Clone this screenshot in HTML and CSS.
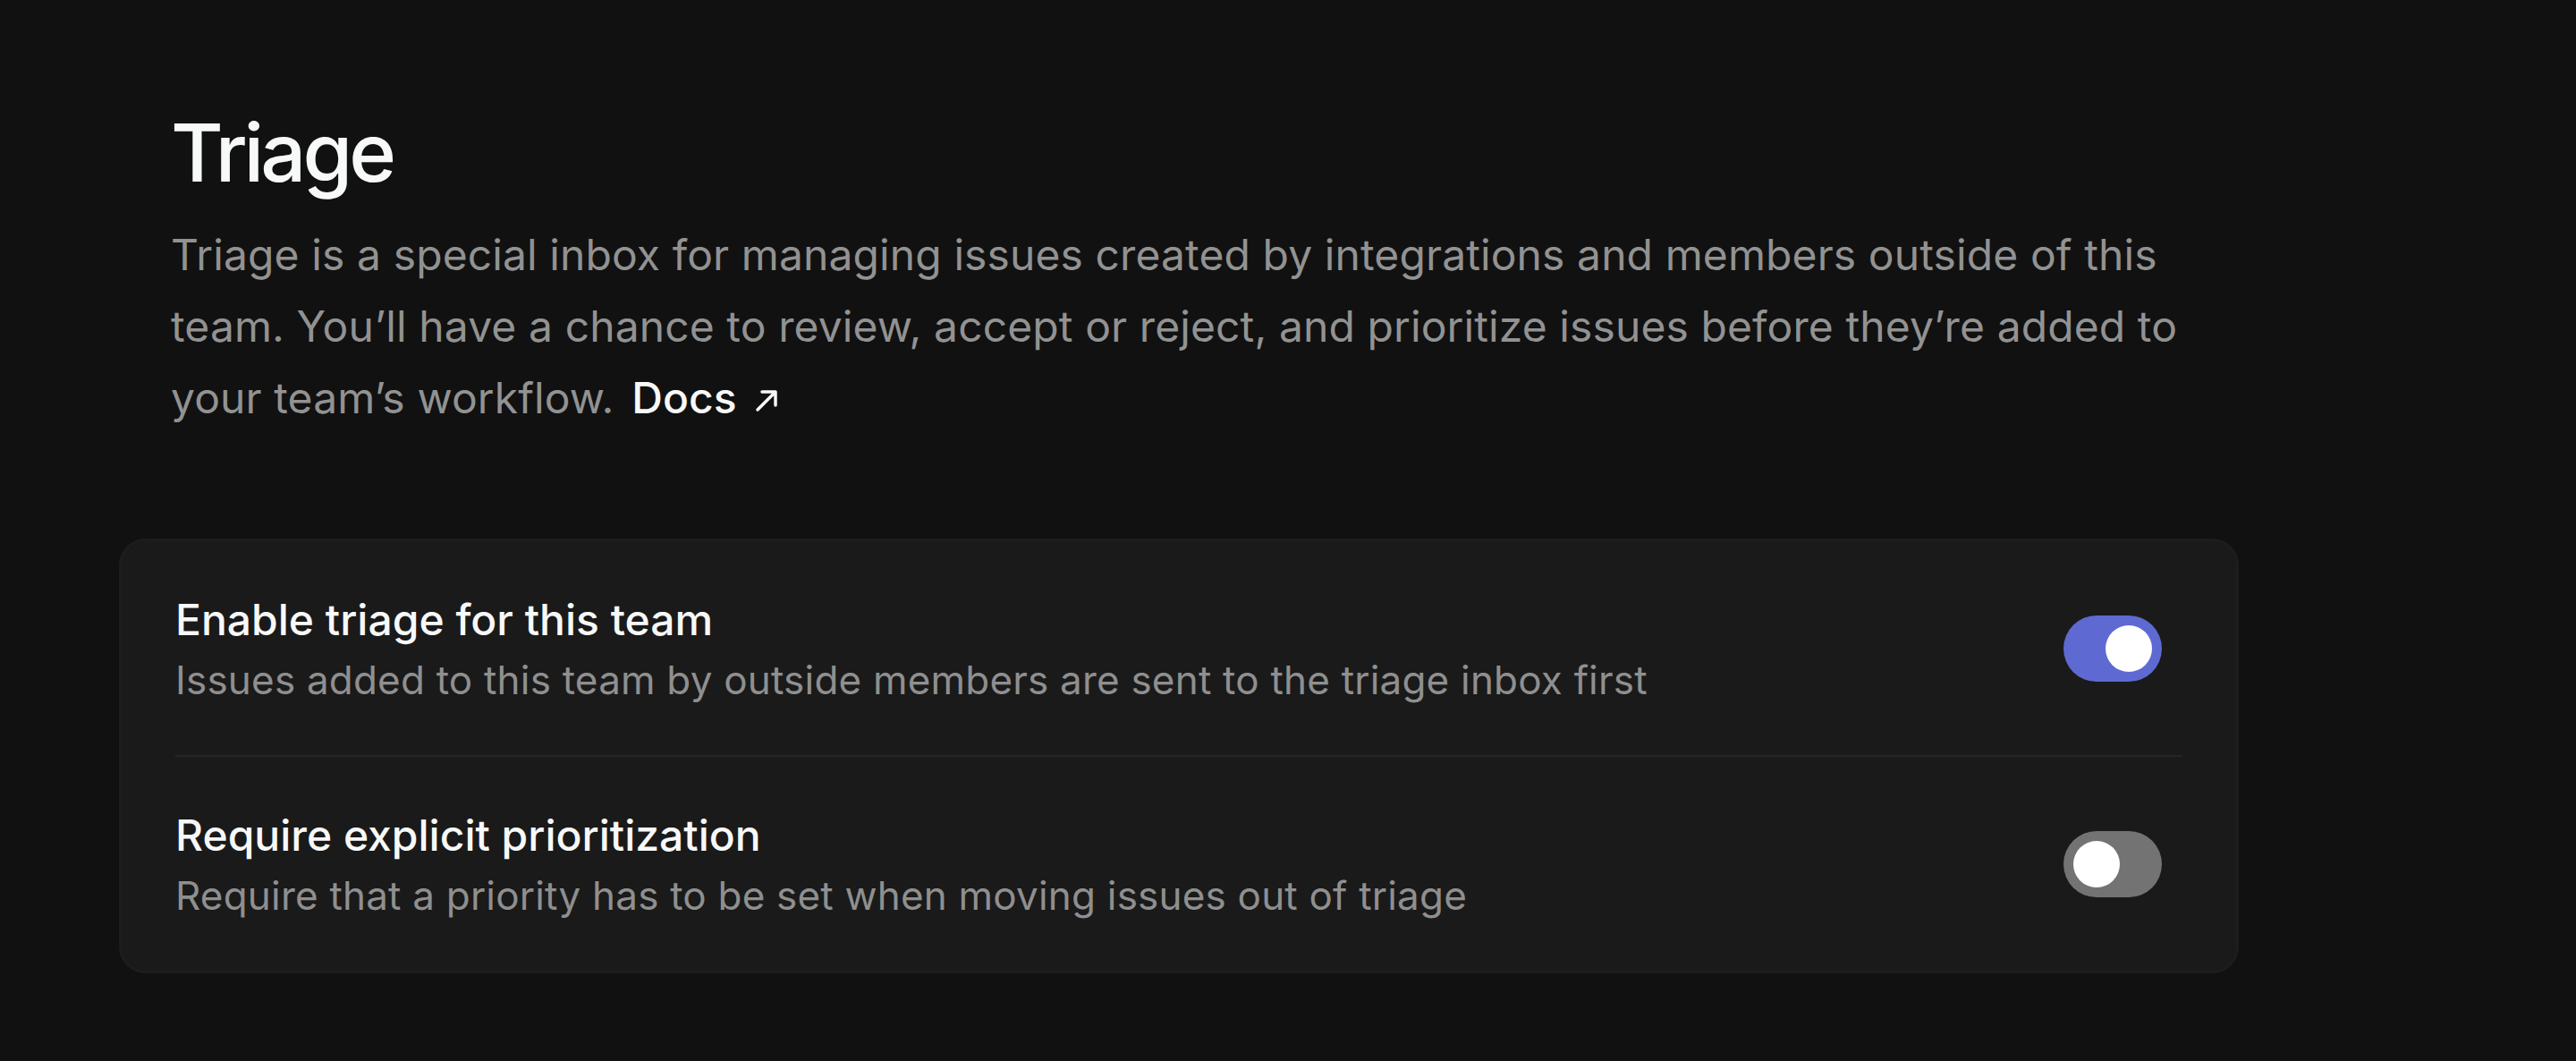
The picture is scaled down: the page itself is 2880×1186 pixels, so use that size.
FILE: index.html
```html
<!DOCTYPE html>
<html lang="en">
<head>
<meta charset="utf-8">
<title>Triage</title>
<link rel="stylesheet" href="styles.css">
</head>
<body>
<main class="page">
  <section class="header">
    <h1 class="title">Triage</h1>
    <p class="desc">Triage is a special inbox for managing issues created by integrations and members outside of this team. You’ll have a chance to review, accept or reject, and prioritize issues before they’re added to your team’s workflow. <a class="docs" href="#"><span class="docs-label">Docs</span><svg class="docs-icon" viewBox="0 0 30 30" aria-hidden="true"><path d="M5 26 L25 6 M10 6 H25 V21" fill="none" stroke="currentColor" stroke-width="3.5" stroke-linecap="round" stroke-linejoin="round"/></svg></a></p>
  </section>
  <div class="card">
    <div class="row">
      <div class="row-text">
        <div class="row-title">Enable triage for this team</div>
        <div class="row-sub">Issues added to this team by outside members are sent to the triage inbox first</div>
      </div>
      <span class="toggle on"><span class="knob"></span></span>
    </div>
    <div class="row">
      <div class="row-text">
        <div class="row-title">Require explicit prioritization</div>
        <div class="row-sub">Require that a priority has to be set when moving issues out of triage</div>
      </div>
      <span class="toggle"><span class="knob"></span></span>
    </div>
  </div>
</main>
</body>
</html>
```

FILE: styles.css
```css
html, body {
  margin: 0;
  padding: 0;
  background: #111111;
}

body {
  font-family: Inter, "Noto Sans", sans-serif;
  color: #f7f8f8;
  -webkit-font-smoothing: antialiased;
}

.page {
  width: 2370px;
  padding: 116px 0 0 133px;
}

.header {
  padding-left: 58px;
}

.title {
  margin: 0;
  font-size: 90px;
  line-height: 110px;
  font-weight: 500;
  color: #f7f8f8;
  letter-spacing: -4px;
}

.desc {
  margin: 19px 0 0;
  max-width: 2270px;
  font-size: 48px;
  line-height: 80px;
  font-weight: 400;
  color: #929292;
  letter-spacing: 0.1px;
}

.docs {
  display: inline-flex;
  align-items: center;
  gap: 18px;
  margin-left: 6px;
  color: #f7f8f8;
  text-decoration: none;
  font-weight: 500;
}

.docs-icon {
  flex: none;
  width: 30px;
  height: 30px;
  margin-top: 4px;
}

.card {
  margin-top: 117px;
  background: #1a1a1a;
  border: 3px solid #1d1d1d;
  border-radius: 30px;
  padding: 0 60px;
}

.row {
  display: flex;
  align-items: center;
  justify-content: space-between;
  padding: 52px 0;
}

.row + .row {
  border-top: 2px solid #262626;
}

.row-title {
  font-size: 48px;
  line-height: 72px;
  font-weight: 500;
  color: #f7f8f8;
}

.row-sub {
  font-size: 44px;
  line-height: 63px;
  letter-spacing: 0.2px;
  color: #8f8f8f;
}

.toggle {
  display: flex;
  align-items: center;
  justify-content: flex-start;
  box-sizing: border-box;
  width: 110px;
  height: 74px;
  padding: 0 11px;
  margin-right: 23px;
  border-radius: 37px;
  background: #737373;
}

.toggle.on {
  justify-content: flex-end;
  background: #5e6ad2;
}

.knob {
  width: 52px;
  height: 52px;
  border-radius: 50%;
  background: #ffffff;
}
```
